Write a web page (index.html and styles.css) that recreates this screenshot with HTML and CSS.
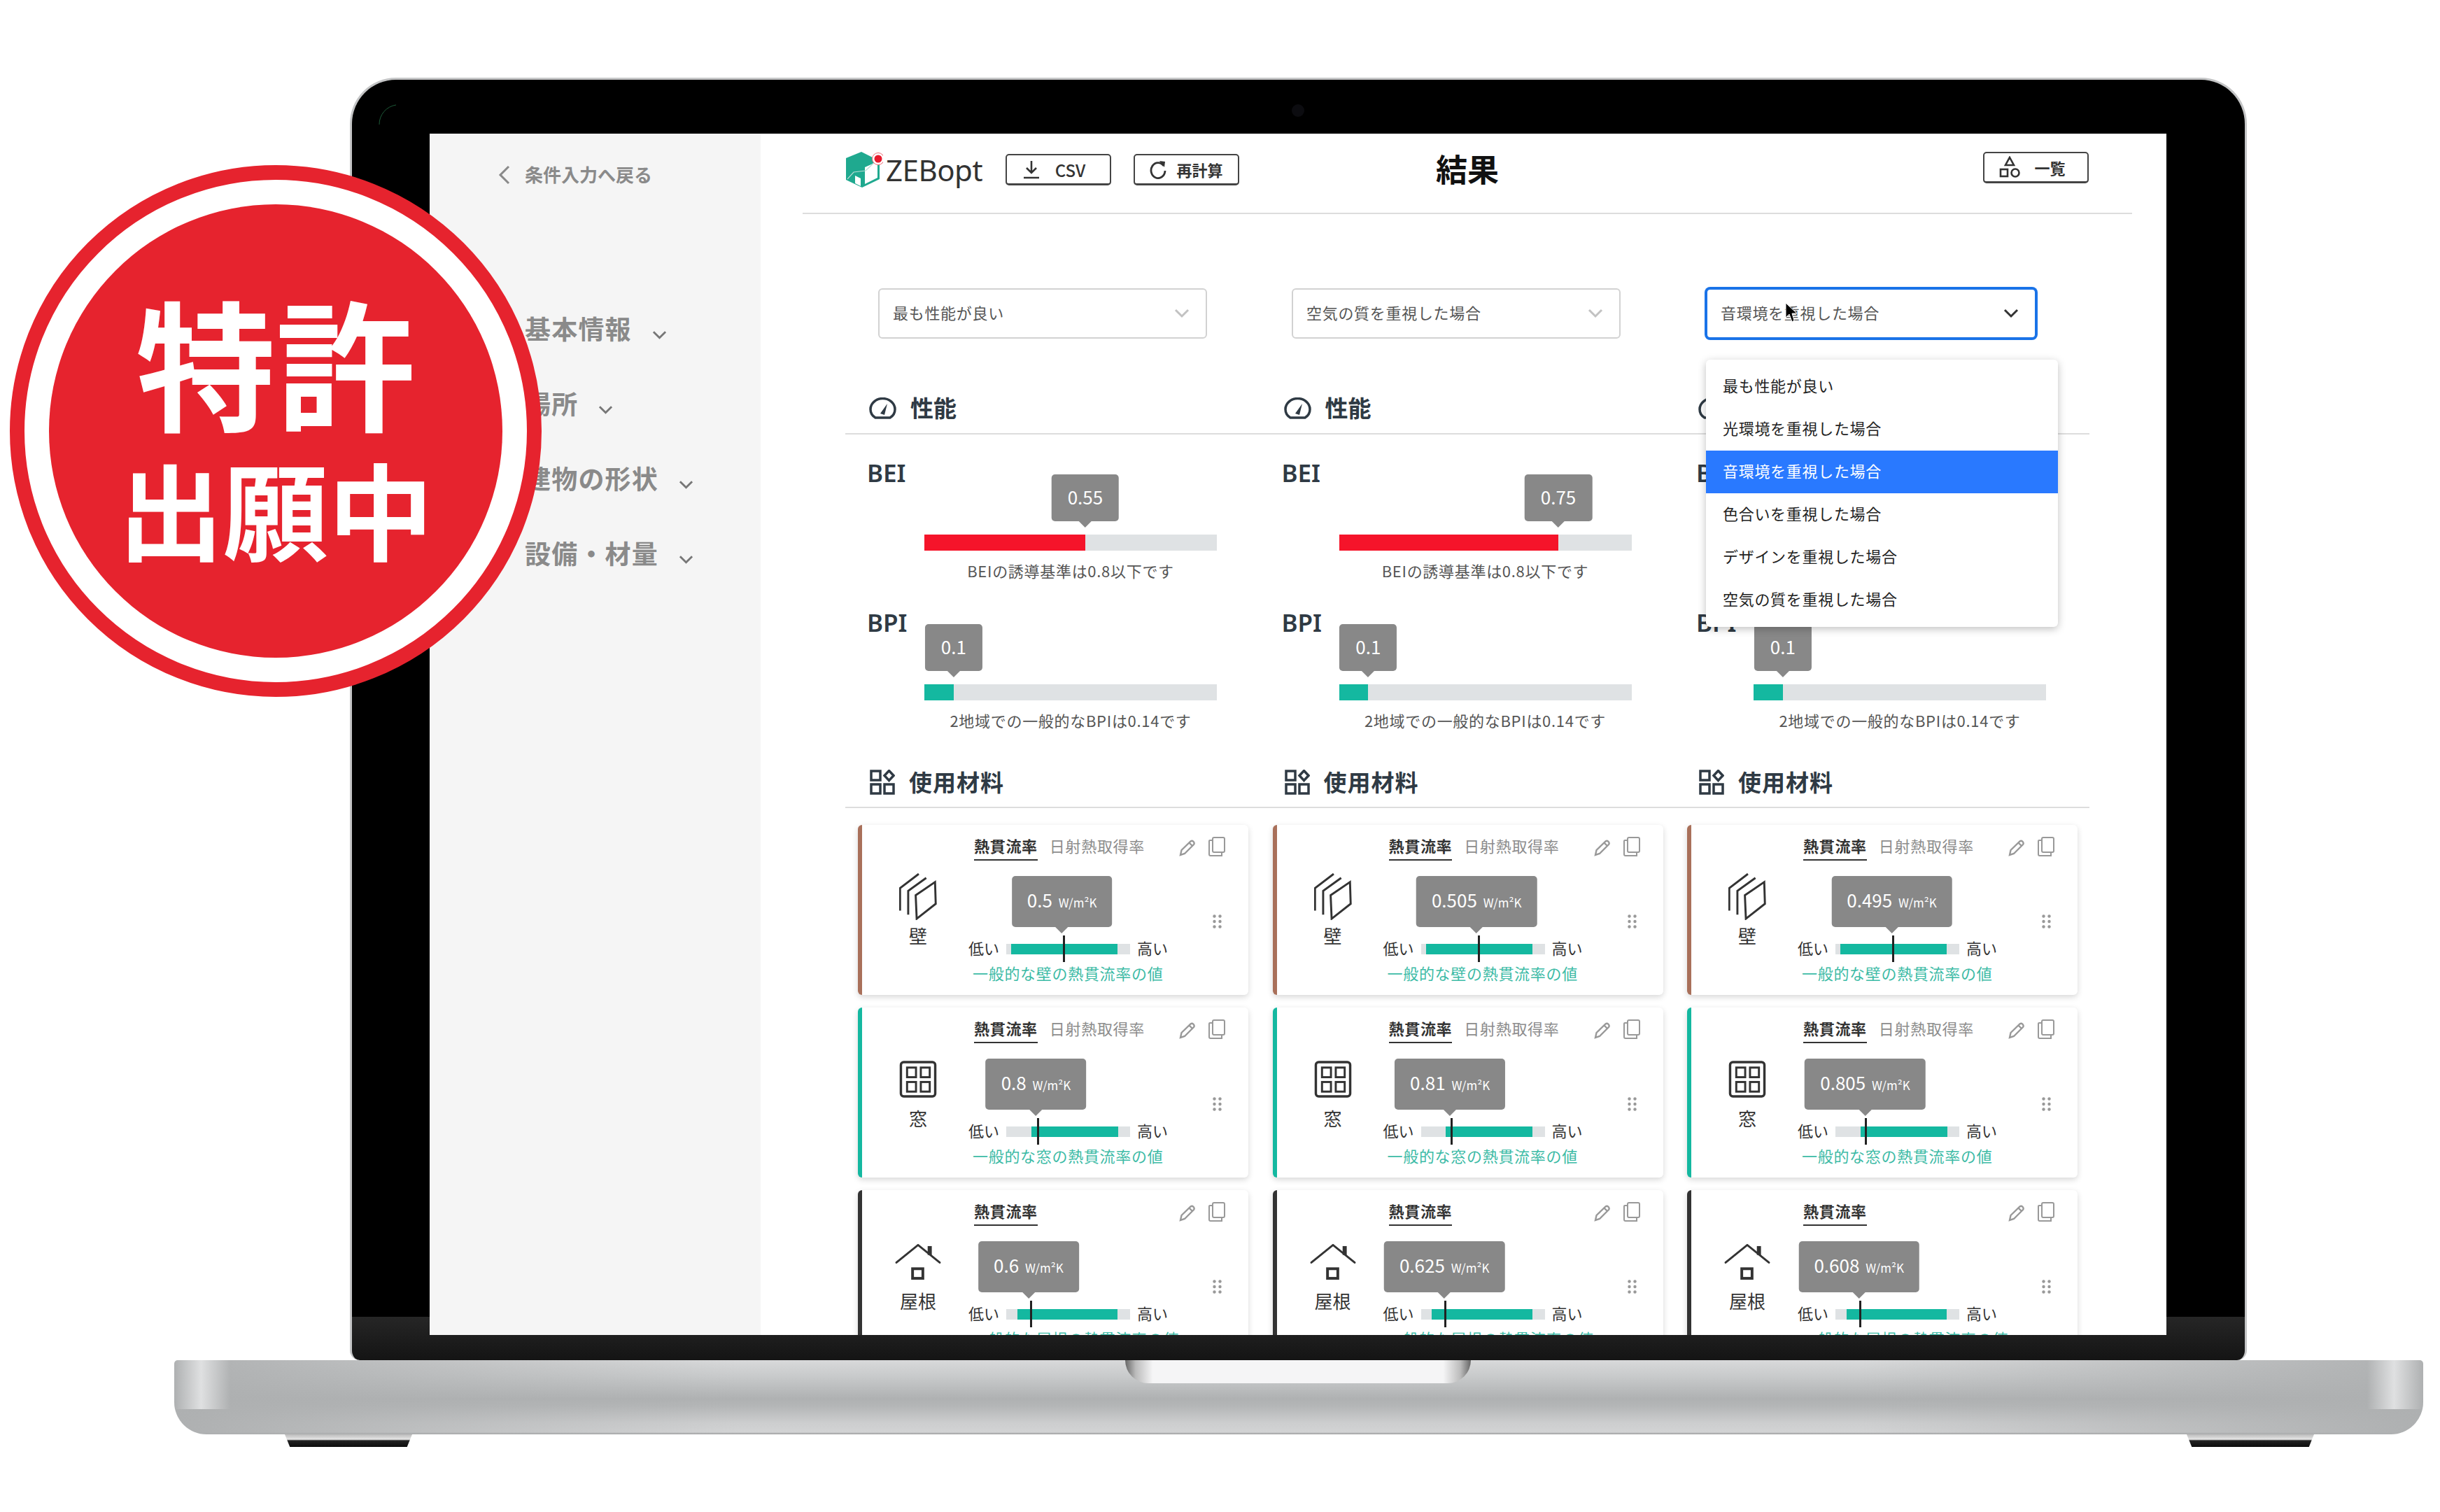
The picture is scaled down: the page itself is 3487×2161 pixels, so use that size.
FILE: index.html
```html
<!DOCTYPE html>
<html lang="ja">
<head>
    <meta charset="UTF-8">
    <title>ZEBopt 結果</title>
    <link rel="stylesheet" href="styles.css">
</head>
<body>
    <svg class="sprite" width="0" height="0">
        <symbol id="i-gauge" viewBox="0 0 39 31"><path d="M9 29 C4 26 2 21 2 17 A17 15 0 0 1 37 17 C37 21 35 26 30 29 Z" fill="none" stroke="currentColor" stroke-width="3.5" stroke-linejoin="round"/><path d="M16 23 L26 9 L22 25 Z" fill="currentColor"/></symbol>
        <symbol id="i-parts" viewBox="0 0 36 36"><g fill="none" stroke="currentColor" stroke-width="3.5"><rect x="2" y="2" width="13" height="13"/><rect x="2" y="21" width="13" height="13"/><rect x="21" y="21" width="13" height="13"/><path d="M27.5 1.5 L34 8.5 L27.5 15.5 L21 8.5 Z"/></g></symbol>
        <symbol id="i-pencil" viewBox="0 0 24 24"><path d="M2 22 L3.5 15 L16.5 2.5 Q18.5 1 20.5 2.8 Q22.5 5 21 7 L8 20 Z M14.5 4.5 L19 9" fill="none" stroke="currentColor" stroke-width="2.4"/></symbol>
        <symbol id="i-copy" viewBox="0 0 24 28"><g fill="none" stroke="currentColor" stroke-width="2"><rect x="6" y="1" width="17" height="21" rx="2"/><path d="M6 5 H2 Q1 5 1 6 V25 Q1 27 3 27 H19 V22"/></g></symbol>
        <symbol id="i-dots" viewBox="0 0 13 20"><g fill="currentColor"><circle cx="2.5" cy="2.5" r="2.2"/><circle cx="10.5" cy="2.5" r="2.2"/><circle cx="2.5" cy="10" r="2.2"/><circle cx="10.5" cy="10" r="2.2"/><circle cx="2.5" cy="17.5" r="2.2"/><circle cx="10.5" cy="17.5" r="2.2"/></g></symbol>
        <symbol id="i-wall" viewBox="15 7 54 69"><g fill="none" stroke="currentColor" stroke-width="3"><path d="M15.5 62 V29 L43 8"/><path d="M27.5 68 V33 L54 14"/><path d="M38.5 39.5 L67 20 L68 52 L40 74 Z"/></g></symbol>
        <symbol id="i-window" viewBox="0 0 54 54"><g fill="none" stroke="currentColor"><rect x="2" y="2" width="50" height="50" rx="4" stroke-width="3.5"/><g stroke-width="3"><rect x="11" y="10" width="13" height="14"/><rect x="31" y="10" width="13" height="14"/><rect x="11" y="31" width="13" height="14"/><rect x="31" y="31" width="13" height="14"/></g></g></symbol>
        <symbol id="i-roof" viewBox="0 0 66 52"><path d="M1.5 27 L33 1.5 L64.5 27" fill="none" stroke="currentColor" stroke-width="3" stroke-linecap="round"/><rect x="47" y="3" width="6" height="13" fill="currentColor"/><rect x="25" y="36" width="15" height="14" fill="none" stroke="currentColor" stroke-width="4"/></symbol>
        <symbol id="i-chev" viewBox="0 0 22 14"><path d="M2 2 L11 11 L20 2" fill="none" stroke="currentColor" stroke-width="3"/></symbol>
        <symbol id="i-check" viewBox="0 0 47 47"><circle cx="23.5" cy="23.5" r="21.5" fill="none" stroke="currentColor" stroke-width="3"/><path d="M13 24 L21 32 L34 15" fill="none" stroke="currentColor" stroke-width="3"/></symbol>
    </svg>

    <div class="laptop">
        <div class="lid">
            <span class="camera"></span>
            <svg class="glint" width="26" height="30" viewBox="0 0 26 30"><path d="M1 29 A28 28 0 0 1 25 1" fill="none" stroke="#1d5a38" stroke-width="1"/></svg>
            <div class="screen">
                <aside class="sidebar">
                    <div class="back">
                        <svg width="19" height="28" viewBox="0 0 19 28"><path d="M16 2 L4 14 L16 26" fill="none" stroke="currentColor" stroke-width="3"/></svg>
                        <span>条件入力へ戻る</span>
                    </div>
                    <nav class="steps">
                        <div class="step"><svg class="step-check"><use href="#i-check"/></svg><span>基本情報</span><svg class="step-chev"><use href="#i-chev"/></svg></div>
                        <div class="step"><svg class="step-check"><use href="#i-check"/></svg><span>場所</span><svg class="step-chev"><use href="#i-chev"/></svg></div>
                        <div class="step"><svg class="step-check"><use href="#i-check"/></svg><span>建物の形状</span><svg class="step-chev"><use href="#i-chev"/></svg></div>
                        <div class="step"><svg class="step-check"><use href="#i-check"/></svg><span>設備・材量</span><svg class="step-chev"><use href="#i-chev"/></svg></div>
                    </nav>
                </aside>

                <main class="main">
                    <header class="topbar">
                        <div class="topbar-left">
                            <svg class="logo-mark" width="55" height="57" viewBox="12 10 55 57">
                                <path d="M14 22 L36 13 L62 26 V52 L37 64 L14 53 Z" fill="#1fa98f"/>
                                <path d="M41 35 L59 27 V50 L41 59 Z" fill="#fff"/>
                                <path d="M27 47 L35 51 V62 L27 58 Z" fill="#fff"/>
                                <path d="M16 52 L25 42 L42 40 L59 24" fill="none" stroke="#b9dcd5" stroke-width="1.2"/>
                                <circle cx="60" cy="23" r="8.5" fill="#fff" stroke="#ee6a75" stroke-width="1"/>
                                <circle cx="60" cy="23" r="5.5" fill="#e8192c"/>
                            </svg>
                            <span class="logo-text">ZEBopt</span>
                            <button class="tool-btn tool-btn-csv">
                                <svg width="24" height="28" viewBox="0 0 24 28"><path d="M12 2 V19 M5 12 L12 19 L19 12 M1 26 H23" fill="none" stroke="currentColor" stroke-width="2.6"/></svg>
                                <span class="tool-csv">CSV</span>
                            </button>
                            <button class="tool-btn">
                                <svg width="24" height="28" viewBox="0 0 24 28"><path d="M20 9 A10 11 0 1 0 22 16" fill="none" stroke="currentColor" stroke-width="2.8"/><path d="M14 2 L22 3 L21 11 Z" fill="currentColor"/></svg>
                                <span>再計算</span>
                            </button>
                        </div>
                        <h1 class="title">結果</h1>
                        <div class="topbar-right">
                            <button class="tool-btn tool-btn-list">
                                <svg width="30" height="32" viewBox="0 0 30 32"><g fill="none" stroke="currentColor" stroke-width="2.6"><path d="M15 2 L21 13 H9 Z"/><rect x="2" y="19" width="10" height="10"/><circle cx="23" cy="24" r="5.5"/></g></svg>
                                <span class="tool-list">一覧</span>
                            </button>
                        </div>
                    </header>

                    <div class="select-row">
                        <div class="select"><span>最も性能が良い</span><svg class="select-chev"><use href="#i-chev"/></svg></div>
                        <div class="select"><span>空気の質を重視した場合</span><svg class="select-chev"><use href="#i-chev"/></svg></div>
                        <div class="select select-open">
                            <span>音環境を重視した場合</span><svg class="select-chev"><use href="#i-chev"/></svg>
                            <svg class="cursor" width="18" height="30" viewBox="0 0 18 30"><path d="M1 1 L1 22 L6 17 L10 28 L13 26 L10 16 L17 16 Z" fill="#000" stroke="#fff" stroke-width="1"/></svg>
                            <ul class="dropdown">
                                <li>最も性能が良い</li>
                                <li>光環境を重視した場合</li>
                                <li class="active">音環境を重視した場合</li>
                                <li>色合いを重視した場合</li>
                                <li>デザインを重視した場合</li>
                                <li>空気の質を重視した場合</li>
                            </ul>
                        </div>
                    </div>

                    <div class="columns">
                        <!-- column 1 -->
                        <section class="column">
                            <h2 class="section-head"><svg class="head-gauge"><use href="#i-gauge"/></svg>性能</h2>
                            <div class="metric">
                                <div class="metric-name">BEI</div>
                                <div class="bar"><i class="bar-fill bar-red" style="width:55%"></i><b class="bar-tip" style="left:55%">0.55</b></div>
                                <p class="bar-note">BEIの誘導基準は0.8以下です</p>
                            </div>
                            <div class="metric">
                                <div class="metric-name">BPI</div>
                                <div class="bar"><i class="bar-fill bar-teal" style="width:10%"></i><b class="bar-tip" style="left:10%">0.1</b></div>
                                <p class="bar-note">2地域での一般的なBPIは0.14です</p>
                            </div>
                            <h2 class="section-head section-parts"><svg class="head-parts"><use href="#i-parts"/></svg>使用材料</h2>

                            <article class="card card-wall">
                                <div class="card-kind"><svg class="kind-wall"><use href="#i-wall"/></svg><span>壁</span></div>
                                <div class="card-main">
                                    <div class="card-top">
                                        <span class="tab tab-on">熱貫流率</span><span class="tab">日射熱取得率</span>
                                        <svg class="tool-pencil"><use href="#i-pencil"/></svg><svg class="tool-copy"><use href="#i-copy"/></svg>
                                    </div>
                                    <div class="card-body">
                                        <div>
                                            <div class="scale"><span>低い</span>
                                                <div class="track"><i class="track-fill" style="left:4%;width:86%"></i><i class="marker" style="left:45.8%"></i><b class="value" style="left:45%">0.5 <small>W/m²K</small></b></div>
                                                <span>高い</span></div>
                                            <p class="scale-note">一般的な壁の熱貫流率の値</p>
                                        </div>
                                        <svg class="handle"><use href="#i-dots"/></svg>
                                    </div>
                                </div>
                            </article>
                            <article class="card card-window">
                                <div class="card-kind"><svg class="kind-window"><use href="#i-window"/></svg><span>窓</span></div>
                                <div class="card-main">
                                    <div class="card-top">
                                        <span class="tab tab-on">熱貫流率</span><span class="tab">日射熱取得率</span>
                                        <svg class="tool-pencil"><use href="#i-pencil"/></svg><svg class="tool-copy"><use href="#i-copy"/></svg>
                                    </div>
                                    <div class="card-body">
                                        <div>
                                            <div class="scale"><span>低い</span>
                                                <div class="track"><i class="track-fill" style="left:20.3%;width:70%"></i><i class="marker" style="left:24.9%"></i><b class="value" style="left:24%">0.8 <small>W/m²K</small></b></div>
                                                <span>高い</span></div>
                                            <p class="scale-note">一般的な窓の熱貫流率の値</p>
                                        </div>
                                        <svg class="handle"><use href="#i-dots"/></svg>
                                    </div>
                                </div>
                            </article>
                            <article class="card card-roof">
                                <div class="card-kind"><svg class="kind-roof"><use href="#i-roof"/></svg><span>屋根</span></div>
                                <div class="card-main">
                                    <div class="card-top">
                                        <span class="tab tab-on">熱貫流率</span>
                                        <svg class="tool-pencil"><use href="#i-pencil"/></svg><svg class="tool-copy"><use href="#i-copy"/></svg>
                                    </div>
                                    <div class="card-body">
                                        <div>
                                            <div class="scale"><span>低い</span>
                                                <div class="track"><i class="track-fill" style="left:9%;width:81%"></i><i class="marker" style="left:19.2%"></i><b class="value" style="left:18%">0.6 <small>W/m²K</small></b></div>
                                                <span>高い</span></div>
                                            <p class="scale-note">一般的な屋根の熱貫流率の値</p>
                                        </div>
                                        <svg class="handle"><use href="#i-dots"/></svg>
                                    </div>
                                </div>
                            </article>
                        </section>

                        <!-- column 2 -->
                        <section class="column">
                            <h2 class="section-head"><svg class="head-gauge"><use href="#i-gauge"/></svg>性能</h2>
                            <div class="metric">
                                <div class="metric-name">BEI</div>
                                <div class="bar"><i class="bar-fill bar-red" style="width:75%"></i><b class="bar-tip" style="left:75%">0.75</b></div>
                                <p class="bar-note">BEIの誘導基準は0.8以下です</p>
                            </div>
                            <div class="metric">
                                <div class="metric-name">BPI</div>
                                <div class="bar"><i class="bar-fill bar-teal" style="width:10%"></i><b class="bar-tip" style="left:10%">0.1</b></div>
                                <p class="bar-note">2地域での一般的なBPIは0.14です</p>
                            </div>
                            <h2 class="section-head section-parts"><svg class="head-parts"><use href="#i-parts"/></svg>使用材料</h2>

                            <article class="card card-wall">
                                <div class="card-kind"><svg class="kind-wall"><use href="#i-wall"/></svg><span>壁</span></div>
                                <div class="card-main">
                                    <div class="card-top">
                                        <span class="tab tab-on">熱貫流率</span><span class="tab">日射熱取得率</span>
                                        <svg class="tool-pencil"><use href="#i-pencil"/></svg><svg class="tool-copy"><use href="#i-copy"/></svg>
                                    </div>
                                    <div class="card-body">
                                        <div>
                                            <div class="scale"><span>低い</span>
                                                <div class="track"><i class="track-fill" style="left:4%;width:86%"></i><i class="marker" style="left:45.8%"></i><b class="value" style="left:45%">0.505 <small>W/m²K</small></b></div>
                                                <span>高い</span></div>
                                            <p class="scale-note">一般的な壁の熱貫流率の値</p>
                                        </div>
                                        <svg class="handle"><use href="#i-dots"/></svg>
                                    </div>
                                </div>
                            </article>
                            <article class="card card-window">
                                <div class="card-kind"><svg class="kind-window"><use href="#i-window"/></svg><span>窓</span></div>
                                <div class="card-main">
                                    <div class="card-top">
                                        <span class="tab tab-on">熱貫流率</span><span class="tab">日射熱取得率</span>
                                        <svg class="tool-pencil"><use href="#i-pencil"/></svg><svg class="tool-copy"><use href="#i-copy"/></svg>
                                    </div>
                                    <div class="card-body">
                                        <div>
                                            <div class="scale"><span>低い</span>
                                                <div class="track"><i class="track-fill" style="left:20.3%;width:70%"></i><i class="marker" style="left:24%"></i><b class="value" style="left:23.5%">0.81 <small>W/m²K</small></b></div>
                                                <span>高い</span></div>
                                            <p class="scale-note">一般的な窓の熱貫流率の値</p>
                                        </div>
                                        <svg class="handle"><use href="#i-dots"/></svg>
                                    </div>
                                </div>
                            </article>
                            <article class="card card-roof">
                                <div class="card-kind"><svg class="kind-roof"><use href="#i-roof"/></svg><span>屋根</span></div>
                                <div class="card-main">
                                    <div class="card-top">
                                        <span class="tab tab-on">熱貫流率</span>
                                        <svg class="tool-pencil"><use href="#i-pencil"/></svg><svg class="tool-copy"><use href="#i-copy"/></svg>
                                    </div>
                                    <div class="card-body">
                                        <div>
                                            <div class="scale"><span>低い</span>
                                                <div class="track"><i class="track-fill" style="left:9%;width:81%"></i><i class="marker" style="left:19.2%"></i><b class="value" style="left:19%">0.625 <small>W/m²K</small></b></div>
                                                <span>高い</span></div>
                                            <p class="scale-note">一般的な屋根の熱貫流率の値</p>
                                        </div>
                                        <svg class="handle"><use href="#i-dots"/></svg>
                                    </div>
                                </div>
                            </article>
                        </section>

                        <!-- column 3 -->
                        <section class="column">
                            <h2 class="section-head"><svg class="head-gauge"><use href="#i-gauge"/></svg>性能</h2>
                            <div class="metric">
                                <div class="metric-name">BEI</div>
                                <div class="bar"><i class="bar-fill bar-red" style="width:65%"></i><b class="bar-tip" style="left:65%">0.65</b></div>
                                <p class="bar-note">BEIの誘導基準は0.8以下です</p>
                            </div>
                            <div class="metric">
                                <div class="metric-name">BPI</div>
                                <div class="bar"><i class="bar-fill bar-teal" style="width:10%"></i><b class="bar-tip" style="left:10%">0.1</b></div>
                                <p class="bar-note">2地域での一般的なBPIは0.14です</p>
                            </div>
                            <h2 class="section-head section-parts"><svg class="head-parts"><use href="#i-parts"/></svg>使用材料</h2>

                            <article class="card card-wall">
                                <div class="card-kind"><svg class="kind-wall"><use href="#i-wall"/></svg><span>壁</span></div>
                                <div class="card-main">
                                    <div class="card-top">
                                        <span class="tab tab-on">熱貫流率</span><span class="tab">日射熱取得率</span>
                                        <svg class="tool-pencil"><use href="#i-pencil"/></svg><svg class="tool-copy"><use href="#i-copy"/></svg>
                                    </div>
                                    <div class="card-body">
                                        <div>
                                            <div class="scale"><span>低い</span>
                                                <div class="track"><i class="track-fill" style="left:4%;width:86%"></i><i class="marker" style="left:45.8%"></i><b class="value" style="left:45.5%">0.495 <small>W/m²K</small></b></div>
                                                <span>高い</span></div>
                                            <p class="scale-note">一般的な壁の熱貫流率の値</p>
                                        </div>
                                        <svg class="handle"><use href="#i-dots"/></svg>
                                    </div>
                                </div>
                            </article>
                            <article class="card card-window">
                                <div class="card-kind"><svg class="kind-window"><use href="#i-window"/></svg><span>窓</span></div>
                                <div class="card-main">
                                    <div class="card-top">
                                        <span class="tab tab-on">熱貫流率</span><span class="tab">日射熱取得率</span>
                                        <svg class="tool-pencil"><use href="#i-pencil"/></svg><svg class="tool-copy"><use href="#i-copy"/></svg>
                                    </div>
                                    <div class="card-body">
                                        <div>
                                            <div class="scale"><span>低い</span>
                                                <div class="track"><i class="track-fill" style="left:20.3%;width:70%"></i><i class="marker" style="left:24%"></i><b class="value" style="left:24%">0.805 <small>W/m²K</small></b></div>
                                                <span>高い</span></div>
                                            <p class="scale-note">一般的な窓の熱貫流率の値</p>
                                        </div>
                                        <svg class="handle"><use href="#i-dots"/></svg>
                                    </div>
                                </div>
                            </article>
                            <article class="card card-roof">
                                <div class="card-kind"><svg class="kind-roof"><use href="#i-roof"/></svg><span>屋根</span></div>
                                <div class="card-main">
                                    <div class="card-top">
                                        <span class="tab tab-on">熱貫流率</span>
                                        <svg class="tool-pencil"><use href="#i-pencil"/></svg><svg class="tool-copy"><use href="#i-copy"/></svg>
                                    </div>
                                    <div class="card-body">
                                        <div>
                                            <div class="scale"><span>低い</span>
                                                <div class="track"><i class="track-fill" style="left:9%;width:81%"></i><i class="marker" style="left:19.2%"></i><b class="value" style="left:19%">0.608 <small>W/m²K</small></b></div>
                                                <span>高い</span></div>
                                            <p class="scale-note">一般的な屋根の熱貫流率の値</p>
                                        </div>
                                        <svg class="handle"><use href="#i-dots"/></svg>
                                    </div>
                                </div>
                            </article>
                        </section>
                    </div>
                </main>
            </div>
        </div>
        <div class="base"><span class="notch"></span></div>
        <div class="feet"><span class="foot"></span><span class="foot"></span></div>
    </div>

    <div class="badge">
        <div class="badge-disc">
            <div class="badge-big">特許</div>
            <div class="badge-small">出願中</div>
        </div>
    </div>
</body>
</html>
```

FILE: styles.css
```css
* {
    box-sizing: border-box;
}
html, body {
    margin: 0;
    background: #fff;
}
body {
    font-family: "Noto Sans CJK JP", "Noto Sans", sans-serif;
    color: #333;
    overflow: hidden;
    height: 2161px;
    position: relative;
}
p, ul, h1, h2 {
    margin: 0;
    padding: 0;
}
svg {
    display: block;
    flex: none;
}
.sprite {
    position: absolute;
}

/* laptop */
.laptop {
    padding-top: 111px;
}
.lid {
    position: relative;
    width: 2711px;
    height: 1833px;
    margin-left: 500px;
    padding: 77px 0 0 111px;
    border: 3px solid #c4c5c6;
    border-bottom: none;
    border-radius: 66px 66px 14px 14px;
    background: linear-gradient(#000 0, #000 1768px, #262626 1768px, #141414 100%);
}
.camera {
    position: absolute;
    left: 1343px;
    top: 35px;
    width: 18px;
    height: 18px;
    border-radius: 50%;
    background: #0c0c10;
}
.glint {
    position: absolute;
    left: 38px;
    top: 35px;
}
.screen {
    display: flex;
    width: 2482px;
    height: 1717px;
    overflow: hidden;
    background: #fff;
}
.base {
    position: relative;
    width: 3214px;
    height: 106px;
    margin-left: 249px;
    border-radius: 5px 5px 46px 46px;
    background:
        linear-gradient(90deg, #aeb0b1 0, rgba(174,176,177,.8) 5%, rgba(174,176,177,0) 25%, rgba(174,176,177,0) 75%, rgba(174,176,177,.8) 95%, #aeb0b1 100%),
        linear-gradient(#d8d9da 0, #c8cacb 22%, #afb1b2 52%, #b4b6b7 62%, #cdcecf 85%, #d2d3d4 97%, #9a9b9c 100%);
}
.base::before, .base::after {
    content: "";
    position: absolute;
    top: 0;
    width: 80px;
    height: 70px;
    background: linear-gradient(90deg, rgba(222,223,224,0), #dfe0e1 48%, rgba(222,223,224,0));
}
.base::before {
    left: 0;
}
.base::after {
    right: 0;
}
.notch {
    position: absolute;
    left: 1359px;
    top: 0;
    width: 494px;
    height: 33px;
    border-radius: 0 0 34px 34px;
    background: linear-gradient(90deg, #666 0, #bbb 3%, #f5f5f6 8%, #f5f5f6 92%, #bbb 97%, #666 100%);
}
.feet {
    display: flex;
    justify-content: space-between;
    width: 3214px;
    margin-left: 249px;
    padding: 0 156px 0 158px;
}
.foot {
    width: 182px;
    height: 18px;
    clip-path: polygon(0 0, 100% 0, 96% 100%, 4% 100%);
    background: linear-gradient(#bbb 0, #e6e6e6 40%, #222 50%, #0d0d0d 100%);
}

/* sidebar */
.sidebar {
    width: 473px;
    flex: none;
    background: #f5f5f5;
    color: #8a8a8a;
}
.back {
    display: flex;
    align-items: center;
    gap: 20px;
    height: 30px;
    margin: 44px 0 0 97px;
    font-size: 26px;
    font-weight: 700;
}
.back span {
    margin-top: -4px;
}
.steps {
    margin-top: 152px;
}
.step {
    display: flex;
    align-items: center;
    height: 107px;
    padding-left: 52px;
    font-size: 37px;
    font-weight: 700;
    letter-spacing: 1.2px;
}
.step span {
    margin-top: -4px;
}
.step-check {
    width: 47px;
    height: 47px;
    margin-right: 37px;
}
.step-chev {
    width: 21px;
    height: 14px;
    margin: 16px 0 0 29px;
    color: #777;
}

/* header */
.main {
    flex: 1;
    min-width: 0;
}
.topbar {
    display: grid;
    grid-template-columns: 1fr auto 1fr;
    align-items: center;
    height: 115px;
    margin: 0 49px 0 60px;
    padding-bottom: 10px;
    border-bottom: 2px solid #ddd;
}
.topbar-left {
    display: flex;
    align-items: center;
    padding-left: 60px;
}
.logo-mark {
    margin-top: 0;
}
.logo-text {
    width: 171px;
    margin-left: 4px;
    font-family: "Noto Sans", sans-serif;
    font-size: 42px;
    letter-spacing: -.5px;
    color: #333;
}
.tool-btn {
    display: flex;
    align-items: center;
    justify-content: center;
    gap: 14px;
    width: 151px;
    height: 45px;
    margin-right: 32px;
    padding: 0;
    border: 2px solid #444;
    border-bottom-width: 3px;
    border-radius: 5px;
    background: #fff;
    color: #333;
    font-family: inherit;
    font-size: 22px;
    font-weight: 700;
}
.tool-btn-csv {
    padding-right: 12px;
}
.tool-btn-list {
    margin-bottom: 6px;
    padding-right: 10px;
}
.tool-csv {
    margin-left: 8px;
    font-size: 24px;
    font-weight: 500;
}
.tool-list {
    margin-left: 6px;
}
.title {
    margin-bottom: 4px;
    font-size: 45px;
    font-weight: 700;
    color: #111;
}
.topbar-right {
    display: flex;
    justify-content: flex-end;
    padding-right: 30px;
}

/* selects */
.select-row {
    display: grid;
    grid-template-columns: repeat(3, 591px);
    margin: 106px 0 0 168px;
}
.select {
    position: relative;
    display: flex;
    align-items: center;
    justify-content: space-between;
    width: 470px;
    height: 72px;
    padding: 0 23px 0 19px;
    border: 2px solid #d2d2d2;
    border-radius: 6px;
    background: #fff;
    font-size: 22px;
    letter-spacing: .7px;
    color: #555;
}
.select span {
    margin-top: -4px;
}
.select-chev {
    width: 22px;
    height: 14px;
    color: #c2c2c2;
}
.select-open {
    z-index: 3;
    width: 472px;
    margin-left: 1px;
    border-color: #1a73e8;
    box-shadow: 0 0 0 2px #1a73e8;
}
.select-open .select-chev {
    color: #333;
}
.cursor {
    position: absolute;
    left: 111px;
    top: 18px;
}
.dropdown {
    position: absolute;
    left: -2px;
    top: 100px;
    width: 503px;
    padding: 8px 0;
    list-style: none;
    border-radius: 6px;
    background: #fff;
    box-shadow: 0 3px 12px rgba(0, 0, 0, .25);
    color: #222;
}
.dropdown li {
    height: 61px;
    padding-left: 24px;
    line-height: 57px;
}
.dropdown .active {
    background: #2979ff;
    color: #fff;
}

/* columns */
.columns {
    display: grid;
    grid-template-columns: repeat(3, 592.5px);
    margin: 72px 0 0 121px;
}
.section-head {
    display: flex;
    align-items: center;
    gap: 20px;
    height: 65px;
    padding: 0 0 11px 34px;
    border-bottom: 2px solid #ddd;
    font-size: 33px;
    font-weight: 700;
    color: #2f3a44;
}
.head-gauge {
    width: 39px;
    height: 31px;
    margin-top: 2px;
}
.head-parts {
    width: 36px;
    height: 36px;
    margin-top: 2px;
}
.section-parts {
    height: 64px;
    margin-top: 45px;
    padding-left: 35px;
    letter-spacing: 1px;
}
.metric {
    padding-top: 36px;
}
.metric + .metric {
    padding-top: 39px;
}
.metric-name {
    height: 38px;
    padding-left: 31px;
    font-family: "Noto Sans", sans-serif;
    font-size: 35px;
    font-weight: 600;
    line-height: 38px;
    color: #2f3a44;
}
.bar {
    position: relative;
    width: 418px;
    height: 23px;
    margin: 69px 0 0 113px;
    background: #dfe2e4;
}
.bar-fill {
    display: block;
    height: 100%;
}
.bar-red {
    background: #f5142a;
}
.bar-teal {
    background: #14b8a0;
}
.bar-tip, .value {
    position: absolute;
    border-radius: 5px;
    background: #888;
    color: #fff;
    font-weight: 400;
    white-space: nowrap;
    transform: translateX(-50%);
    font-size: 26px;
}
.bar-tip {
    bottom: 42px;
    height: 67px;
    padding: 0 23px;
    line-height: 63px;
}
.bar-tip::after, .value::after {
    content: "";
    position: absolute;
    left: 50%;
    top: 100%;
    margin-left: -9px;
    border: 9px solid transparent;
    border-top-color: #888;
    border-bottom: none;
}
.bar-note {
    width: 418px;
    height: 30px;
    margin: 15px 0 0 113px;
    font-size: 22px;
    letter-spacing: .7px;
    line-height: 26px;
    text-align: center;
    color: #555;
    white-space: nowrap;
}

/* material cards */
.card {
    display: flex;
    width: 558px;
    height: 243px;
    margin: 18px 0 0 18px;
    border-left: 6px solid #333;
    border-radius: 6px;
    background: #fff;
    box-shadow: 0 3px 9px rgba(0, 0, 0, .16);
}
.section-parts + .card {
    margin-top: 24px;
}
.card-wall {
    border-left-color: #a9705a;
}
.card-window {
    border-left-color: #14b8a0;
}
.card-kind {
    display: flex;
    flex-direction: column;
    align-items: center;
    width: 160px;
    flex: none;
    padding-top: 69px;
    font-size: 26px;
    line-height: 24px;
    color: #333;
}
.card-kind svg {
    height: 67px;
    margin-bottom: 10px;
}
.kind-wall {
    width: 54px;
}
.kind-window {
    width: 54px;
    padding: 7px 0;
}
.kind-roof {
    width: 66px;
    padding: 8px 0;
}
.card-main {
    flex: 1;
    min-width: 0;
    padding-right: 33px;
}
.card-top {
    display: flex;
    align-items: flex-start;
    height: 51px;
    padding-top: 16px;
    border-bottom: none;
}
.tab {
    height: 35px;
    margin-right: 17px;
    font-size: 22px;
    letter-spacing: .7px;
    line-height: 26px;
    color: #8d8d8d;
}
.tab-on {
    border-bottom: 2px solid #333;
    font-weight: 700;
    color: #333;
}
.tool-pencil, .tool-copy {
    color: #999;
}
.tool-pencil {
    width: 24px;
    height: 24px;
    margin: 5px 0 0 auto;
}
.tool-copy {
    width: 24px;
    height: 28px;
    margin: 1px 0 0 18px;
}
.card-body {
    display: flex;
    justify-content: space-between;
    padding-right: 5px;
}
.scale {
    display: flex;
    align-items: center;
    gap: 10px;
    height: 30px;
    margin: 111px 0 0 -8px;
    font-size: 22px;
}
.scale > span {
    margin-top: -4px;
}
.track {
    position: relative;
    width: 177px;
    height: 15px;
    background: #dfe2e4;
}
.track-fill {
    position: absolute;
    top: 0;
    bottom: 0;
    background: #14b8a0;
}
.marker {
    position: absolute;
    top: -12px;
    bottom: -11px;
    width: 3px;
    background: #222;
}
.value {
    bottom: 39px;
    height: 73px;
    padding: 0 22px;
    line-height: 68px;
}
.value small {
    margin-left: 3px;
    font-size: 17px;
}
.scale-note {
    margin: 5px 0 0 -2px;
    font-size: 22px;
    letter-spacing: .7px;
    line-height: 28px;
    color: #3dbba6;
    white-space: nowrap;
}
.handle {
    width: 13px;
    height: 20px;
    margin-top: 77px;
    color: #999;
}

/* patent badge */
.badge {
    position: absolute;
    left: 14px;
    top: 236px;
    width: 760px;
    height: 760px;
    padding: 35px;
    border: 21px solid #e6232e;
    border-radius: 50%;
    background: #fff;
}
.badge-disc {
    display: flex;
    flex-direction: column;
    align-items: center;
    width: 100%;
    height: 100%;
    padding-top: 112px;
    border-radius: 50%;
    background: #e6232e;
    color: #fff;
    font-weight: 700;
}
.badge-big {
    font-size: 200px;
    line-height: 220px;
}
.badge-small {
    margin-top: 6px;
    font-size: 150px;
    line-height: 190px;
}
```
